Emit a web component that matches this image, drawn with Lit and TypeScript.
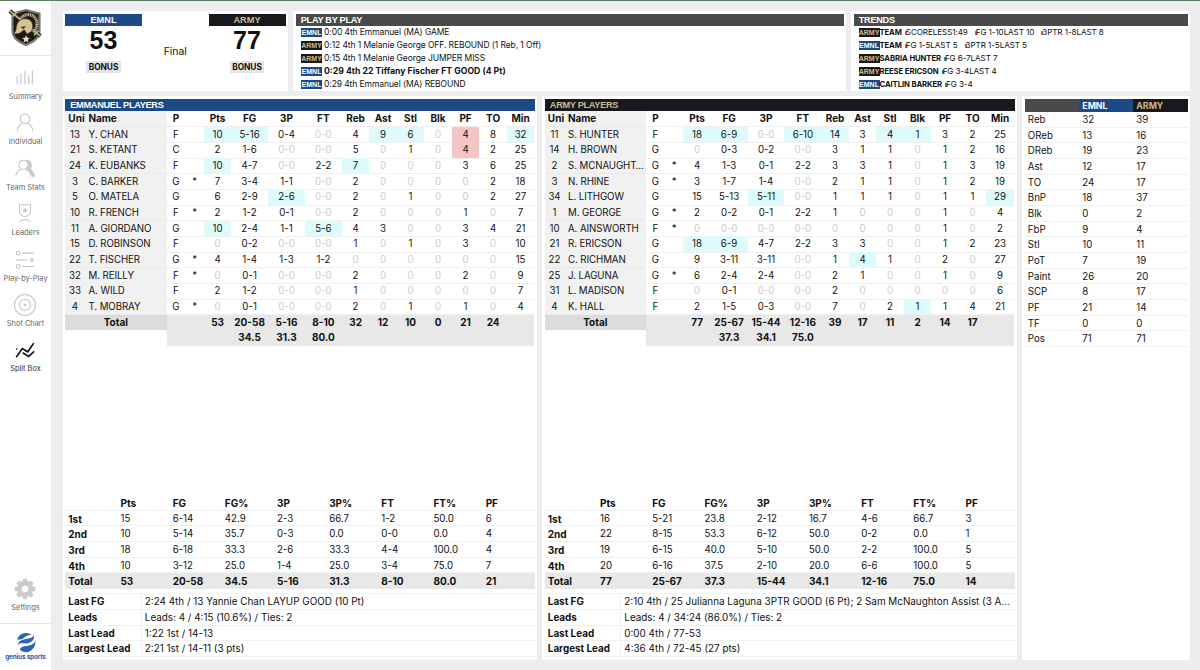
import { LitElement, html, svg, css } from 'lit'
import { customElement, property } from 'lit/decorators.js'
import { classMap } from 'lit/directives/class-map.js'

interface Team {
	code: string
	title: string
	players: string[]
	totals: string[]
	percents: string[]
	periods: string[]
	notes: [string, string][]
}

// uni|name|position|bench|stats, "+" marks a game high and "!" foul trouble
const emnl: Team = {
	code: 'EMNL',
	title: 'EMMANUEL PLAYERS',
	players: [
		'13|Y. CHAN|F||10+ 5-16+ 0-4 0-0 4 9+ 6+ 0 4! 8 32+',
		'21|S. KETANT|C||2 1-6 0-0 0-0 5 0 1 0 4! 2 25',
		'24|K. EUBANKS|F||10+ 4-7 0-0 2-2 7+ 0 0 0 3 6 25',
		'3|C. BARKER|G|*|7 3-4 1-1 0-0 2 0 0 0 0 2 18',
		'5|O. MATELA|G||6 2-9 2-6+ 0-0 2 0 1 0 0 2 27',
		'10|R. FRENCH|F|*|2 1-2 0-1 0-0 2 0 0 0 1 0 7',
		'11|A. GIORDANO|G||10+ 2-4 1-1 5-6+ 4 3 0 0 3 4 21',
		'15|D. ROBINSON|F||0 0-2 0-0 0-0 1 0 1 0 3 0 10',
		'22|T. FISCHER|G|*|4 1-4 1-3 1-2 0 0 0 0 0 0 15',
		'32|M. REILLY|F|*|0 0-1 0-0 0-0 2 0 0 0 2 0 9',
		'33|A. WILD|F||2 1-2 0-0 0-0 1 0 0 0 0 0 7',
		'4|T. MOBRAY|G|*|0 0-1 0-0 0-0 2 0 1 0 1 0 4',
	],
	totals: ['53', '20-58', '5-16', '8-10', '32', '12', '10', '0', '21', '24', ''],
	percents: ['', '34.5', '31.3', '80.0', '', '', '', '', '', '', ''],
	periods: [
		'1st 15 6-14 42.9 2-3 66.7 1-2 50.0 6',
		'2nd 10 5-14 35.7 0-3 0.0 0-0 0.0 4',
		'3rd 18 6-18 33.3 2-6 33.3 4-4 100.0 4',
		'4th 10 3-12 25.0 1-4 25.0 3-4 75.0 7',
		'Total 53 20-58 34.5 5-16 31.3 8-10 80.0 21',
	],
	notes: [
		['Last FG', '2:24 4th / 13 Yannie Chan LAYUP GOOD (10 Pt)'],
		['Leads', 'Leads: 4 / 4:15 (10.6%) / Ties: 2'],
		['Last Lead', '1:22 1st / 14-13'],
		['Largest Lead', '2:21 1st / 14-11 (3 pts)'],
	],
}

const army: Team = {
	code: 'ARMY',
	title: 'ARMY PLAYERS',
	players: [
		'11|S. HUNTER|F||18+ 6-9+ 0-0 6-10+ 14+ 3 4+ 1+ 3 2 25',
		'14|H. BROWN|G||0 0-3 0-2 0-0 3 1 1 0 1 2 16',
		'2|S. MCNAUGHT…|G|*|4 1-3 0-1 2-2 3 3 1 0 1 3 19',
		'3|N. RHINE|G|*|3 1-7 1-4 0-0 2 1 1 0 1 2 19',
		'34|L. LITHGOW|G||15 5-13 5-11+ 0-0 1 1 1 0 1 1 29+',
		'1|M. GEORGE|G|*|2 0-2 0-1 2-2 1 0 0 0 1 0 4',
		'10|A. AINSWORTH|F|*|0 0-0 0-0 0-0 0 0 0 0 1 0 2',
		'21|R. ERICSON|G||18+ 6-9+ 4-7 2-2 3 3 0 0 1 2 23',
		'22|C. RICHMAN|G||9 3-11 3-11 0-0 1 4+ 1 0 2 0 27',
		'25|J. LAGUNA|G|*|6 2-4 2-4 0-0 2 1 0 0 1 0 9',
		'31|L. MADISON|F||0 0-1 0-0 0-0 2 0 0 0 0 0 6',
		'4|K. HALL|F||2 1-5 0-3 0-0 7 0 2 1+ 1 4 21',
	],
	totals: ['77', '25-67', '15-44', '12-16', '39', '17', '11', '2', '14', '17', ''],
	percents: ['', '37.3', '34.1', '75.0', '', '', '', '', '', '', ''],
	periods: [
		'1st 16 5-21 23.8 2-12 16.7 4-6 66.7 3',
		'2nd 22 8-15 53.3 6-12 50.0 0-2 0.0 1',
		'3rd 19 6-15 40.0 5-10 50.0 2-2 100.0 5',
		'4th 20 6-16 37.5 2-10 20.0 6-6 100.0 5',
		'Total 77 25-67 37.3 15-44 34.1 12-16 75.0 14',
	],
	notes: [
		['Last FG', '2:10 4th / 25 Julianna Laguna 3PTR GOOD (6 Pt); 2 Sam McNaughton Assist (3 A…'],
		['Leads', 'Leads: 4 / 34:24 (86.0%) / Ties: 2'],
		['Last Lead', '0:00 4th / 77-53'],
		['Largest Lead', '4:36 4th / 72-45 (27 pts)'],
	],
}

const plays = [
	['EMNL', '0:00 4th Emmanuel (MA) GAME'],
	['ARMY', '0:12 4th 1 Melanie George OFF. REBOUND (1 Reb, 1 Off)'],
	['ARMY', '0:15 4th 1 Melanie George JUMPER MISS'],
	['EMNL', '0:29 4th 22 Tiffany Fischer FT GOOD (4 Pt)', 'score'],
	['EMNL', '0:29 4th Emmanuel (MA) REBOUND'],
]

const trends: { team: string; who: string; hot?: boolean; items: string[] }[] = [
	{ team: 'ARMY', who: 'TEAM', items: ['SCORELESS1:49', 'FG 1-10LAST 10', '3PTR 1-8LAST 8'] },
	{ team: 'EMNL', who: 'TEAM', items: ['FG 1-5LAST 5', '3PTR 1-5LAST 5'] },
	{ team: 'ARMY', who: 'SABRIA HUNTER', hot: true, items: ['FG 6-7LAST 7'] },
	{ team: 'ARMY', who: 'REESE ERICSON', hot: true, items: ['FG 3-4LAST 4'] },
	{ team: 'EMNL', who: 'CAITLIN BARKER', hot: true, items: ['FG 3-4'] },
]

const comparison = [
	'Reb 32 39', 'OReb 13 16', 'DReb 19 23', 'Ast 12 17', 'TO 24 17',
	'BnP 18 37', 'Blk 0 2', 'FbP 9 4', 'Stl 10 11', 'PoT 7 19',
	'Paint 26 20', 'SCP 8 17', 'PF 21 14', 'TF 0 0', 'Pos 71 71',
]

const icons = {
	summary: svg`<path d="M3.5 10v9M7.5 7v12M12 4v15M16 9v10M20 4v15" stroke-width="1.2"/>`,
	individual: svg`<circle cx="12" cy="7.4" r="5.2"/><path d="M3.6 21c0-4.6 2.1-7.2 5.3-8.7M20.4 21c0-4.6-2.1-7.2-5.3-8.7"/>`,
	team: svg`<path d="M14 2.5c5 0 6.2 6.6 3 9.8 3 1.2 4.6 3.7 5.5 7.7h-2.2c-.8-3.6-2.3-5.3-5-6.6z" fill="#cfcfcf"/><circle cx="10.3" cy="7.4" r="5" fill="#fff"/><path d="M2 20.5c0-4.5 2-6.8 5.2-8.2M18.6 20.5c0-4.500-2-6.800-5.200-8.200"/>`,
	leaders: svg`<path d="M6 2h12v6.500c0 3.500-2.500 5.700-6 6.800-3.500-1.100-6-3.300-6-6.800zM6.200 20.500c1.500-2 3.500-2.500 5.800-2.500s4.300.5 5.800 2.500"/><path d="M12 5l.9 2 2.100.2-1.600 1.400.5 2.100-1.900-1.100-1.900 1.100.5-2.100L9 7.200l2.100-.2z" fill="#c4c4c4" stroke="none"/>`,
	plays: svg`<circle cx="4.500" cy="4.500" r="2"/><circle cx="4.500" cy="19" r="2"/><path d="M8.500 4.500H22M8.500 19H22M2 12h12.500M17.500 10l4 4M21.500 10l-4 4"/>`,
	shots: svg`<circle cx="12" cy="12" r="11.500"/><circle cx="12" cy="12" r="6"/><circle cx="12" cy="12" r=".8" fill="#c4c4c4"/>`,
	split: svg`<path d="M2.500 20L9 10.500l6 3.500 6.500-9.500M2.500 10.500l1 .7M9.500 15l6.500 4 6-5.500" stroke="#111" stroke-width="1.800"/>`,
	settings: svg`<g fill="#cbcbcb" stroke="none">${[0, 45, 90, 135].map((a) => svg`<rect x="9.500" y=".8" width="5" height="22.400" rx="1" transform="rotate(${a} 12 12)"/>`)}<circle cx="12" cy="12" r="8.600"/><circle cx="12" cy="12" r="3.600" fill="#fff"/></g>`,
}

const crest = svg`
	<path d="M5 5l15-4 15 4v18c0 9-6 13-15 17C11 36 5 32 5 23z" fill="#1b1b1b" stroke="#77766b" stroke-width="2.400"/>
	<path d="M2 2l34 28" stroke="#28251f" stroke-width="4.500"/>
	<path d="M2 2l34 28M5 8l5-5M29 29l5-5" stroke="#c7b384" stroke-width="2"/>
	<path d="M14 11C18 4 30 4 32 14c.7 5-1 9-4 12" fill="none" stroke="#cbb88d" stroke-width="3.500" stroke-dasharray="1.400 .600"/>
	<path d="M9 22c0-8 6-13 13-11 6 2 7 9 4 14l-5 3-3-5-5 4-7 1 2-3z" fill="#d7c193" stroke="#26231d" stroke-width=".8"/>
	<path d="M14 20l6-1-3 3z" fill="#262219"/>
	<path d="M20 29l1.200 2.800 3.100.2-2.400 2 .8 3-2.700-1.600-2.700 1.600.8-3-2.400-2 3.100-.2z" fill="#eee3c4"/>`

const base = css`
	* {
		box-sizing: border-box;
	}

	.bar {
		height: 12px;
		padding-left: 5.3px;
		font: bold 9.2px/13px 'Liberation Sans', Arial, sans-serif;
		letter-spacing: -0.3px;
		color: #fff;
		background: #4a4a4a;
		white-space: nowrap;
	}

	.bar.emnl {
		background: #1c4a86;
	}

	.bar.army {
		background: #19191d;
		color: #ccb98c;
	}
`

@customElement('side-nav')
export class SideNav extends LitElement {
	static styles = [
		base,
		css`
			:host {
				display: flex;
				flex-direction: column;
				align-items: center;
				background: #fff;
				height: 100%;
				min-height: 0;
				color: #666;
				font-size: 7.4px;
			}

			.crest {
				width: 100%;
				height: 55px;
				flex: none;
				padding: 7px 0 0 8px;
				border-bottom: 1px solid #e9e9e9;
			}

			.crest svg {
				width: 36px;
				height: 40px;
				display: block;
			}

			.item {
				height: 45.4px;
				display: flex;
				flex-direction: column;
				align-items: center;
				white-space: nowrap;
			}

			.menu {
				padding-top: 11px;
			}

			.icon {
				width: 22px;
				height: 22px;
				fill: none;
				stroke: #c4c4c4;
				stroke-width: 1.1;
				overflow: visible;
			}

			.label {
				line-height: 10px;
				margin-top: 3px;
			}

			.active {
				color: #333;
			}

			.bottom {
				margin-top: auto;
			}

			.brand {
				width: 100%;
				height: 47px;
				flex: none;
				border-top: 1px solid #e4e4e4;
				display: flex;
				flex-direction: column;
				align-items: center;
				padding-top: 8px;
				color: #2a5bb0;
				font-weight: 700;
				font-size: 6.3px;
				line-height: 8px;
				white-space: nowrap;
				letter-spacing: -0.12px;
			}

			.brand svg {
				width: 22px;
				height: 21px;
			}
		`,
	]

	item(icon: keyof typeof icons, label: string, extra = '') {
		return html`<div class="item ${extra}">
			<svg class="icon" viewBox="0 0 24 24">${icons[icon]}</svg>
			<span class="label">${label}</span>
		</div>`
	}

	render() {
		return html`
			<div class="crest"><svg viewBox="0 0 40 42">${crest}</svg></div>
			<div class="menu">
				${this.item('summary', 'Summary')} ${this.item('individual', 'Individual')}
				${this.item('team', 'Team Stats')} ${this.item('leaders', 'Leaders')}
				${this.item('plays', 'Play-by-Play')} ${this.item('shots', 'Shot Chart')}
				${this.item('split', 'Split Box', 'active')}
			</div>
			${this.item('settings', 'Settings', 'bottom')}
			<div class="brand">
				<svg viewBox="0 0 24 24" fill="#2f62ba">
					<path d="M2 9C3 3 8 1 14 1l5 2c-5 0-7 2-10 4-3 2-5 1-7 2z" />
					<path d="M3 15c0-5 4-6 9-7 4-1 7-1 9-4 1 5-3 8-8 9-5 0-8-1-10 2z" />
					<path d="M5 20c1-3 4-4 8-4 5-1 8-2 10-6 0 8-5 13-11 13-3 0-5-1-7-3z" />
				</svg>
				<span>genius sports</span>
			</div>
		`
	}
}

@customElement('team-sheet')
export class TeamSheet extends LitElement {
	static styles = [
		base,
		css`
			:host {
				display: flex;
				flex-direction: column;
				background: #fff;
				padding: 3px 2.5px;
				min-width: 0;
			}

			.row {
				display: grid;
				grid-template-columns: 20px 81.7px 18.6px 18.7px 27.2px repeat(3, 36.9px) repeat(7, 27.5px);
				height: 15.66px;
				line-height: 15.4px;
				text-align: center;
				white-space: nowrap;
			}

			.row > span {
				border-bottom: 1px solid #f0f0f0;
			}

			.row > .side {
				background: #f1f1f1;
				border-color: #e9e9e9;
			}

			.row > .name {
				text-align: left;
				padding-left: 3.5px;
				letter-spacing: -0.08px;
			}

			.head,
			.total {
				font-weight: 700;
				font-size: 10px;
			}

			.row > .empty {
				color: #cdcdcd;
			}

			.row > .high {
				background: #dffafa;
			}

			.row > .foul {
				background: #f3c5c5;
			}

			.row.total > span {
				background: #e8e8e8;
				border: 0;
			}

			.row.total > .label {
				grid-column: span 2;
				background: #dcdcdc;
			}

			.row.total > .blank {
				background: none;
				grid-column: span 2;
			}

			.row.head > .side:first-child {
				padding-left: 3px;
			}

			.periods {
				margin-top: auto;
			}

			.period {
				display: grid;
				grid-template-columns: repeat(9, 1fr);
				height: 15.66px;
				line-height: 16px;
				border-bottom: 1px solid #f0f0f0;
			}

			.period > span {
				padding-left: 3.3px;
			}

			.period > span:first-child {
				font-weight: 700;
				font-size: 10px;
			}

			.period.total {
				background: #e8e8e8;
				border: 0;
			}

			.notes {
				margin-top: 4.3px;
				border-top: 1px solid #f3f3f3;
				font-size: 9.9px;
			}

			.note {
				display: grid;
				grid-template-columns: 76.5px minmax(0, 1fr);
				height: 15.66px;
				line-height: 15px;
				border-bottom: 1px solid #f0f0f0;
				white-space: nowrap;
			}

			.note > b {
				padding-left: 3.3px;
				border-right: 1px solid #f0f0f0;
			}

			.note > span {
				padding-left: 3.3px;
			}
		`,
	]

	@property({ attribute: false }) team!: Team

	player(line: string) {
		const [uni, name, position, bench, stats] = line.split('|')
		return html`<div class="row">
			<span class="side">${uni}</span><span class="side name">${name}</span>
			<span>${position}</span><span>${bench}</span>
			${stats.split(' ').map((stat) => {
				const value = stat.replace(/[+!]/, '')
				const classes = {
					high: stat.endsWith('+'),
					foul: stat.endsWith('!'),
					empty: value === '0' || value === '0-0',
				}
				return html`<span class=${classMap(classes)}>${value}</span>`
			})}
		</div>`
	}

	render() {
		const { team } = this
		return html`
			<div class="bar ${team.code.toLowerCase()}">${team.title}</div>
			<div class="row head">
				<span class="side">Uni</span><span class="side name">Name</span><span>P</span><span></span>
				${['Pts', 'FG', '3P', 'FT', 'Reb', 'Ast', 'Stl', 'Blk', 'PF', 'TO', 'Min'].map((h) => html`<span>${h}</span>`)}
			</div>
			${team.players.map((line) => this.player(line))}
			<div class="row total">
				<span class="label">Total</span><span></span><span></span>
				${team.totals.map((value) => html`<span>${value}</span>`)}
			</div>
			<div class="row total">
				<span class="blank"></span><span></span><span></span>
				${team.percents.map((value) => html`<span>${value}</span>`)}
			</div>
			<div class="periods">
				<div class="period head">
					${['', 'Pts', 'FG', 'FG%', '3P', '3P%', 'FT', 'FT%', 'PF'].map((h) => html`<span>${h}</span>`)}
				</div>
				${team.periods.map(
					(line) => html`<div class="period ${line.startsWith('Total') ? 'total' : ''}">
						${line.split(' ').map((value) => html`<span>${value}</span>`)}
					</div>`
				)}
			</div>
			<div class="notes">
				${team.notes.map(([label, text]) => html`<div class="note"><b>${label}</b><span>${text}</span></div>`)}
			</div>
		`
	}
}

@customElement('app-root')
export class AppRoot extends LitElement {
	static styles = [
		base,
		css`
			:host {
				box-sizing: border-box;
				display: grid;
				grid-template-columns: 51px 1fr;
				grid-template-rows: minmax(0, 1fr);
				height: 670px;
				overflow: hidden;
				border-top: 1px solid #557a5d;
				background: #ededf0;
				color: #111;
				font-family: Inter, 'Liberation Sans', sans-serif;
				font-size: 9.7px;
			}

			.main {
				padding: 10px 10px 10px 11.5px;
				display: flex;
				flex-direction: column;
				gap: 5px;
				min-width: 0;
			}

			.top,
			.sheets {
				display: grid;
				gap: 5px;
			}

			.top {
				grid-template-columns: 225.5px 553px 1fr;
				height: 80px;
			}

			.sheets {
				grid-template-columns: 474.5px 475px 1fr;
				height: 564px;
			}

			.panel {
				background: #fff;
				padding: 3px 2.5px;
				min-width: 0;
				overflow: hidden;
			}

			.score {
				display: grid;
				grid-template-columns: 77px 1fr 77px;
				text-align: center;
			}

			.score .bar {
				padding: 0;
				letter-spacing: 0;
			}

			.points {
				font: bold 25px/27px 'Liberation Sans', Arial, sans-serif;
				margin-top: 1px;
			}

			.bonus {
				display: inline-block;
				margin-top: 6.5px;
				padding: 0 2.5px;
				background: #e4e4e4;
				font-weight: 700;
				font-size: 8.3px;
				line-height: 12px;
			}

			.status {
				padding-top: 31px;
				font-size: 10.4px;
			}

			.feed {
				padding: 0 5.5px;
				font-size: 8.5px;
				letter-spacing: -0.09px;
				white-space: nowrap;
			}

			.entry {
				height: 13px;
				line-height: 13px;
				display: flex;
				align-items: center;
			}

			.entry.score-line {
				font-weight: 700;
				font-size: 8.7px;
				letter-spacing: 0;
			}

			.tag {
				width: 21px;
				height: 8.5px;
				margin-right: 2px;
				display: inline-block;
				flex: none;
				text-align: center;
				font: bold 7px/9px 'Liberation Sans', Arial, sans-serif;
				letter-spacing: 0;
				color: #fff;
				background: #1c4a86;
			}

			.tag.army {
				background: #19191d;
				color: #ccb98c;
			}

			.trends {
				font-size: 8.1px;
				padding-left: 5px;
			}

			.trends .tag {
				margin-right: 0;
			}

			.trends b {
				font-size: 7.7px;
				margin-right: 3px;
			}

			.trend {
				margin-right: 7px;
				display: inline-flex;
				align-items: center;
			}

			.trend i {
				width: 2px;
				height: 4px;
				margin-right: -1px;
				margin-top: 1px;
				background: #d25353;
			}

			.trend.hot i {
				background: #3e9158;
			}

			.compare {
				display: grid;
				grid-template-columns: 54.5px 54px 1fr;
				height: 15.66px;
				line-height: 16px;
				border-bottom: 1px solid #f0f0f0;
			}

			.compare > span {
				padding-left: 3.3px;
			}

			.compare.top-line {
				height: 13px;
				border: 0;
			}

			.compare .bar {
				height: 13px;
				padding-left: 3.3px;
				font-family: inherit;
				font-size: 8.8px;
				letter-spacing: 0;
			}
		`,
	]

	tag(code: string) {
		return html`<span class="tag ${code.toLowerCase()}">${code}</span>`
	}

	side(code: string, points: number) {
		return html`<div>
			<div class="bar ${code.toLowerCase()}">${code}</div>
			<div class="points">${points}</div>
			<span class="bonus">BONUS</span>
		</div>`
	}

	render() {
		return html`
			<side-nav></side-nav>
			<div class="main">
				<div class="top">
					<div class="panel score">
						${this.side('EMNL', 53)}
						<div class="status">Final</div>
						${this.side('ARMY', 77)}
					</div>
					<div class="panel">
						<div class="bar">PLAY BY PLAY</div>
						<div class="feed">
							${plays.map(
								([code, text, score]) =>
									html`<div class="entry ${score ? 'score-line' : ''}">${this.tag(code)}${text}</div>`
							)}
						</div>
					</div>
					<div class="panel">
						<div class="bar">TRENDS</div>
						<div class="feed trends">
							${trends.map(
								(t) => html`<div class="entry">
									${this.tag(t.team)}<b>${t.who}</b>
									${t.items.map((item) => html`<span class="trend ${t.hot ? 'hot' : ''}"><i></i>${item}</span>`)}
								</div>`
							)}
						</div>
					</div>
				</div>
				<div class="sheets">
					<team-sheet .team=${emnl}></team-sheet>
					<team-sheet .team=${army}></team-sheet>
					<div class="panel">
						<div class="compare top-line">
							<div class="bar"></div>
							<div class="bar emnl">EMNL</div>
							<div class="bar army">ARMY</div>
						</div>
						${comparison.map(
							(line) => html`<div class="compare">${line.split(' ').map((v) => html`<span>${v}</span>`)}</div>`
						)}
					</div>
				</div>
			</div>
		`
	}
}
